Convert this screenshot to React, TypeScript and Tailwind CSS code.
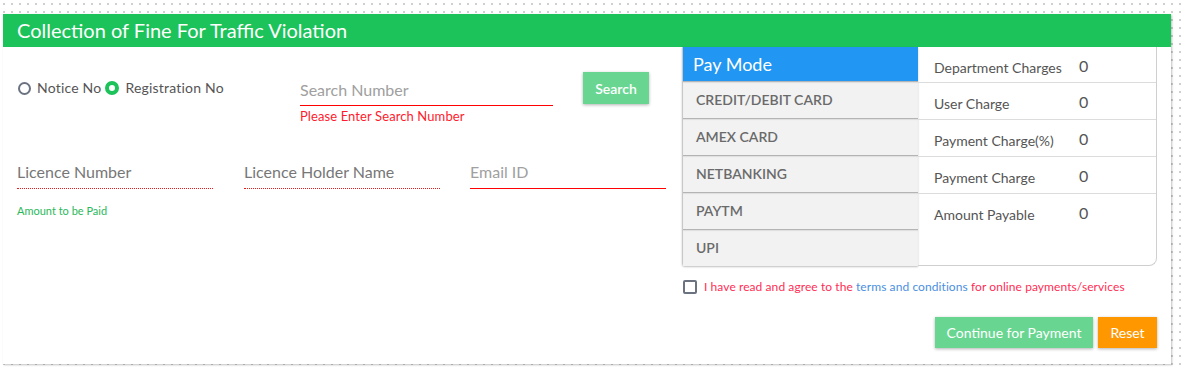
import React from "react";

const payModes = ["CREDIT/DEBIT CARD", "AMEX CARD", "NETBANKING", "PAYTM", "UPI"];

const charges = [
  { label: "Department Charges", value: "0" },
  { label: "User Charge", value: "0" },
  { label: "Payment Charge(%)", value: "0" },
  { label: "Payment Charge", value: "0" },
  { label: "Amount Payable", value: "0" },
];

const FineCollectionPage: React.FC = () => {
  return (
    <div className="min-h-screen bg-white bg-[radial-gradient(circle,#cfcfcf_1px,transparent_1.2px)] bg-[length:8px_8px] pt-[14px] pl-[3px] font-['Lato','Open_Sans',sans-serif]">
      <div className="w-[1168px] h-[350px] bg-white shadow-[1px_1px_2px_rgba(0,0,0,0.25)]">
        <div className="h-[33px] bg-[#1cc25a] pl-[14px] text-[20px] leading-[33px] text-white">
          Collection of Fine For Traffic Violation
        </div>

        <div className="flex">
          {/* form side */}
          <div className="w-[679px] pl-[14px]">
            <div className="flex items-start mt-[25px]">
              <div className="w-[283px] pt-[6px] flex items-center text-[14px] leading-[20px] text-[#555] tracking-[0.2px]">
                <span className="w-[13px] h-[13px] rounded-full border-2 border-[#6b7280] ml-[1px]"></span>
                <span className="ml-[6px]">Notice No</span>
                <span className="w-[14px] h-[14px] rounded-full border-[4px] border-[#1cc25a] ml-[4px]"></span>
                <span className="ml-[6px]">Registration No</span>
              </div>
              <div className="w-[253px] pt-[8px]">
                <div className="h-[26px] border-b border-[#ff0000] text-[16px] leading-[20px] text-[#a0a0a0]">
                  Search Number
                </div>
                <div className="mt-[2px] text-[13px] leading-[16px] text-[#ff1b2d] tracking-[0.1px]">
                  Please Enter Search Number
                </div>
              </div>
              <button className="ml-[30px] w-[66px] h-[32px] bg-[#68d691] text-white text-[14px] font-semibold shadow-[0_1px_3px_rgba(0,0,0,0.3)]">
                Search
              </button>
            </div>

            <div className="flex mt-[38px] text-[16px] leading-[20px]">
              <div className="w-[196px] pb-[6px] border-b border-dotted border-[#e31b1b] text-[#777]">
                Licence Number
              </div>
              <div className="ml-[31px] w-[196px] pb-[6px] border-b border-dotted border-[#e31b1b] text-[#777]">
                Licence Holder Name
              </div>
              <div className="ml-[30px] w-[196px] pb-[6px] border-b border-[#ff0000] text-[#a0a0a0]">
                Email ID
              </div>
            </div>

            <div className="mt-[15px] text-[11px] leading-[14px] text-[#2bb85a]">
              Amount to be Paid
            </div>
          </div>

          {/* payment side */}
          <div className="w-[475px]">
            <div className="flex">
              <div className="w-[236px] border-l border-[#c8c8c8] rounded-bl-[3px] shadow-[0_1px_2px_rgba(0,0,0,0.25)]">
                <div className="h-[34px] bg-[#2196f3] pl-[10px] text-[18px] leading-[34px] text-white">
                  Pay Mode
                </div>
                {payModes.map((mode) => (
                  <div
                    key={mode}
                    className="h-[37px] bg-[#f2f2f2] border-t border-[#b4b4b4] pl-[13px] pt-[9px] text-[14px] leading-[18px] font-semibold text-[#6a6a6a] shadow-[inset_0_1px_1px_rgba(0,0,0,0.08)]"
                  >
                    {mode}
                  </div>
                ))}
              </div>
              <div className="w-[239px] border-r border-b border-[#cfcfcf] rounded-br-[8px]">
                {charges.map((row, i) => (
                  <div
                    key={row.label}
                    className={`flex items-start ${i === 0 ? "h-[36px]" : "h-[37px]"} ${i < 4 ? "border-b border-[#dcdcdc]" : ""}`}
                  >
                    <span className="w-[161px] pl-[16px] pt-[13px] text-[14px] leading-[16px] text-[#555]">
                      {row.label}
                    </span>
                    <span className="pt-[9px] text-[16px] leading-[20px] text-[#555]">
                      {row.value}
                    </span>
                  </div>
                ))}
              </div>
            </div>

            <div className="flex items-center mt-[14px] ml-[1px]">
              <span className="w-[14px] h-[14px] border-2 border-[#6b7280] rounded-[2px]"></span>
              <span className="ml-[7px] text-[12px] leading-[14px] text-[#ff2d55] tracking-[0.08px]">
                I have read and agree to the{" "}
                <span className="text-[#4a8fe0]">terms and conditions</span>{" "}
                for online payments/services
              </span>
            </div>

            <div className="flex justify-end mt-[23px]">
              <button className="w-[158px] h-[31px] bg-[#68d691] text-white text-[14px] shadow-[0_1px_3px_rgba(0,0,0,0.3)]">
                Continue for Payment
              </button>
              <button className="ml-[5px] w-[59px] h-[31px] bg-[#ff9800] text-white text-[14px] shadow-[0_1px_3px_rgba(0,0,0,0.3)]">
                Reset
              </button>
            </div>
          </div>
        </div>
      </div>
    </div>
  );
};

export default function App() {
  return <FineCollectionPage />;
}
